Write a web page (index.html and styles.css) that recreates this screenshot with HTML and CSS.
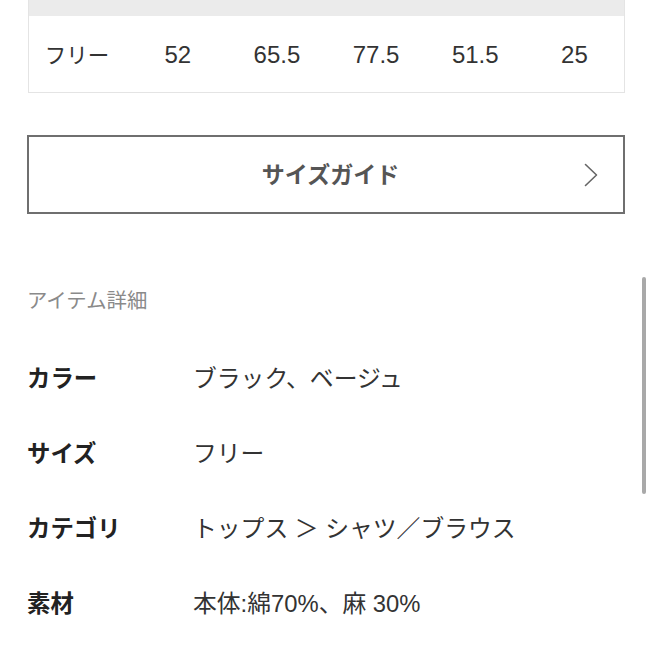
FILE: index.html
```html
<!DOCTYPE html>
<html lang="ja">
<head>
<meta charset="utf-8">
<link rel="stylesheet" href="styles.css">
</head>
<body>
<div class="page">
  <div class="size-table">
    <div class="thead"></div>
    <div class="trow">
      <span class="jp">フリー</span>
      <span>52</span>
      <span>65.5</span>
      <span>77.5</span>
      <span>51.5</span>
      <span>25</span>
    </div>
  </div>

  <a class="guide-btn">
    <span class="guide-spacer"></span>
    <span class="guide-label">サイズガイド</span>
    <span class="guide-chev">
      <svg width="14" height="24" viewBox="0 0 14 24"><path d="M1.5 1.5 L12.5 12 L1.5 22.5" fill="none" stroke="#666" stroke-width="1.6" stroke-linecap="round" stroke-linejoin="round"/></svg>
    </span>
  </a>

  <h2 class="sec-title">アイテム詳細</h2>

  <dl class="details">
    <div class="drow"><dt>カラー</dt><dd>ブラック、ベージュ</dd></div>
    <div class="drow"><dt>サイズ</dt><dd>フリー</dd></div>
    <div class="drow"><dt>カテゴリ</dt><dd>トップス ＞ シャツ／ブラウス</dd></div>
    <div class="drow"><dt>素材</dt><dd>本体:綿70%、麻 30%</dd></div>
  </dl>
</div>
<div class="scrollbar"></div>
</body>
</html>
```

FILE: styles.css
```css
html, body {
  margin: 0;
  padding: 0;
  background: #fff;
}
body {
  width: 653px;
  height: 653px;
  overflow: hidden;
  position: relative;
  font-family: "Noto Sans CJK JP", "Noto Sans", sans-serif;
  color: #222;
}
.page {
  padding: 0 28px 0 27px;
}
.size-table {
  margin-left: 1px;
  border: 1px solid #e4e4e4;
  border-top: none;
}
.thead {
  height: 16px;
  background: #ebebeb;
}
.trow {
  height: 76px;
  display: grid;
  grid-template-columns: repeat(6, 1fr);
  align-items: center;
  justify-items: center;
  font-family: "Liberation Sans", Arial, sans-serif;
  font-size: 24px;
  color: #333;
  padding-top: 2px;
  box-sizing: border-box;
}
.trow .jp {
  font-family: "Noto Sans CJK JP", sans-serif;
  font-size: 21.5px;
  margin-left: -3px;
  margin-top: -3px;
}
.guide-btn {
  margin-top: 42px;
  height: 75px;
  border: 2px solid #6f6f6f;
  display: grid;
  grid-template-columns: 1fr auto 1fr;
  align-items: center;
  text-decoration: none;
}
.guide-label {
  font-size: 23px;
  font-weight: 700;
  color: #555;
  padding-left: 9px;
  padding-bottom: 3px;
}
.guide-chev {
  justify-self: end;
  padding-right: 25px;
  display: flex;
}
.sec-title {
  margin: 71px 0 0;
  font-size: 20.4px;
  font-weight: 400;
  line-height: 28px;
  color: #8a8a8a;
}
.details {
  margin: 26px 0 0;
}
.drow {
  height: 75px;
  display: grid;
  grid-template-columns: 166px 1fr;
  align-items: center;
}
.drow dt {
  font-size: 23.4px;
  font-weight: 700;
  color: #222;
}
.drow dd {
  margin: 0;
  font-family: "Liberation Sans", "Noto Sans CJK JP", sans-serif;
  font-size: 23.8px;
  color: #333;
}
.scrollbar {
  position: absolute;
  left: 642px;
  top: 277px;
  width: 4px;
  height: 217px;
  border-radius: 2px;
  background: #a9a9a9;
}
```
